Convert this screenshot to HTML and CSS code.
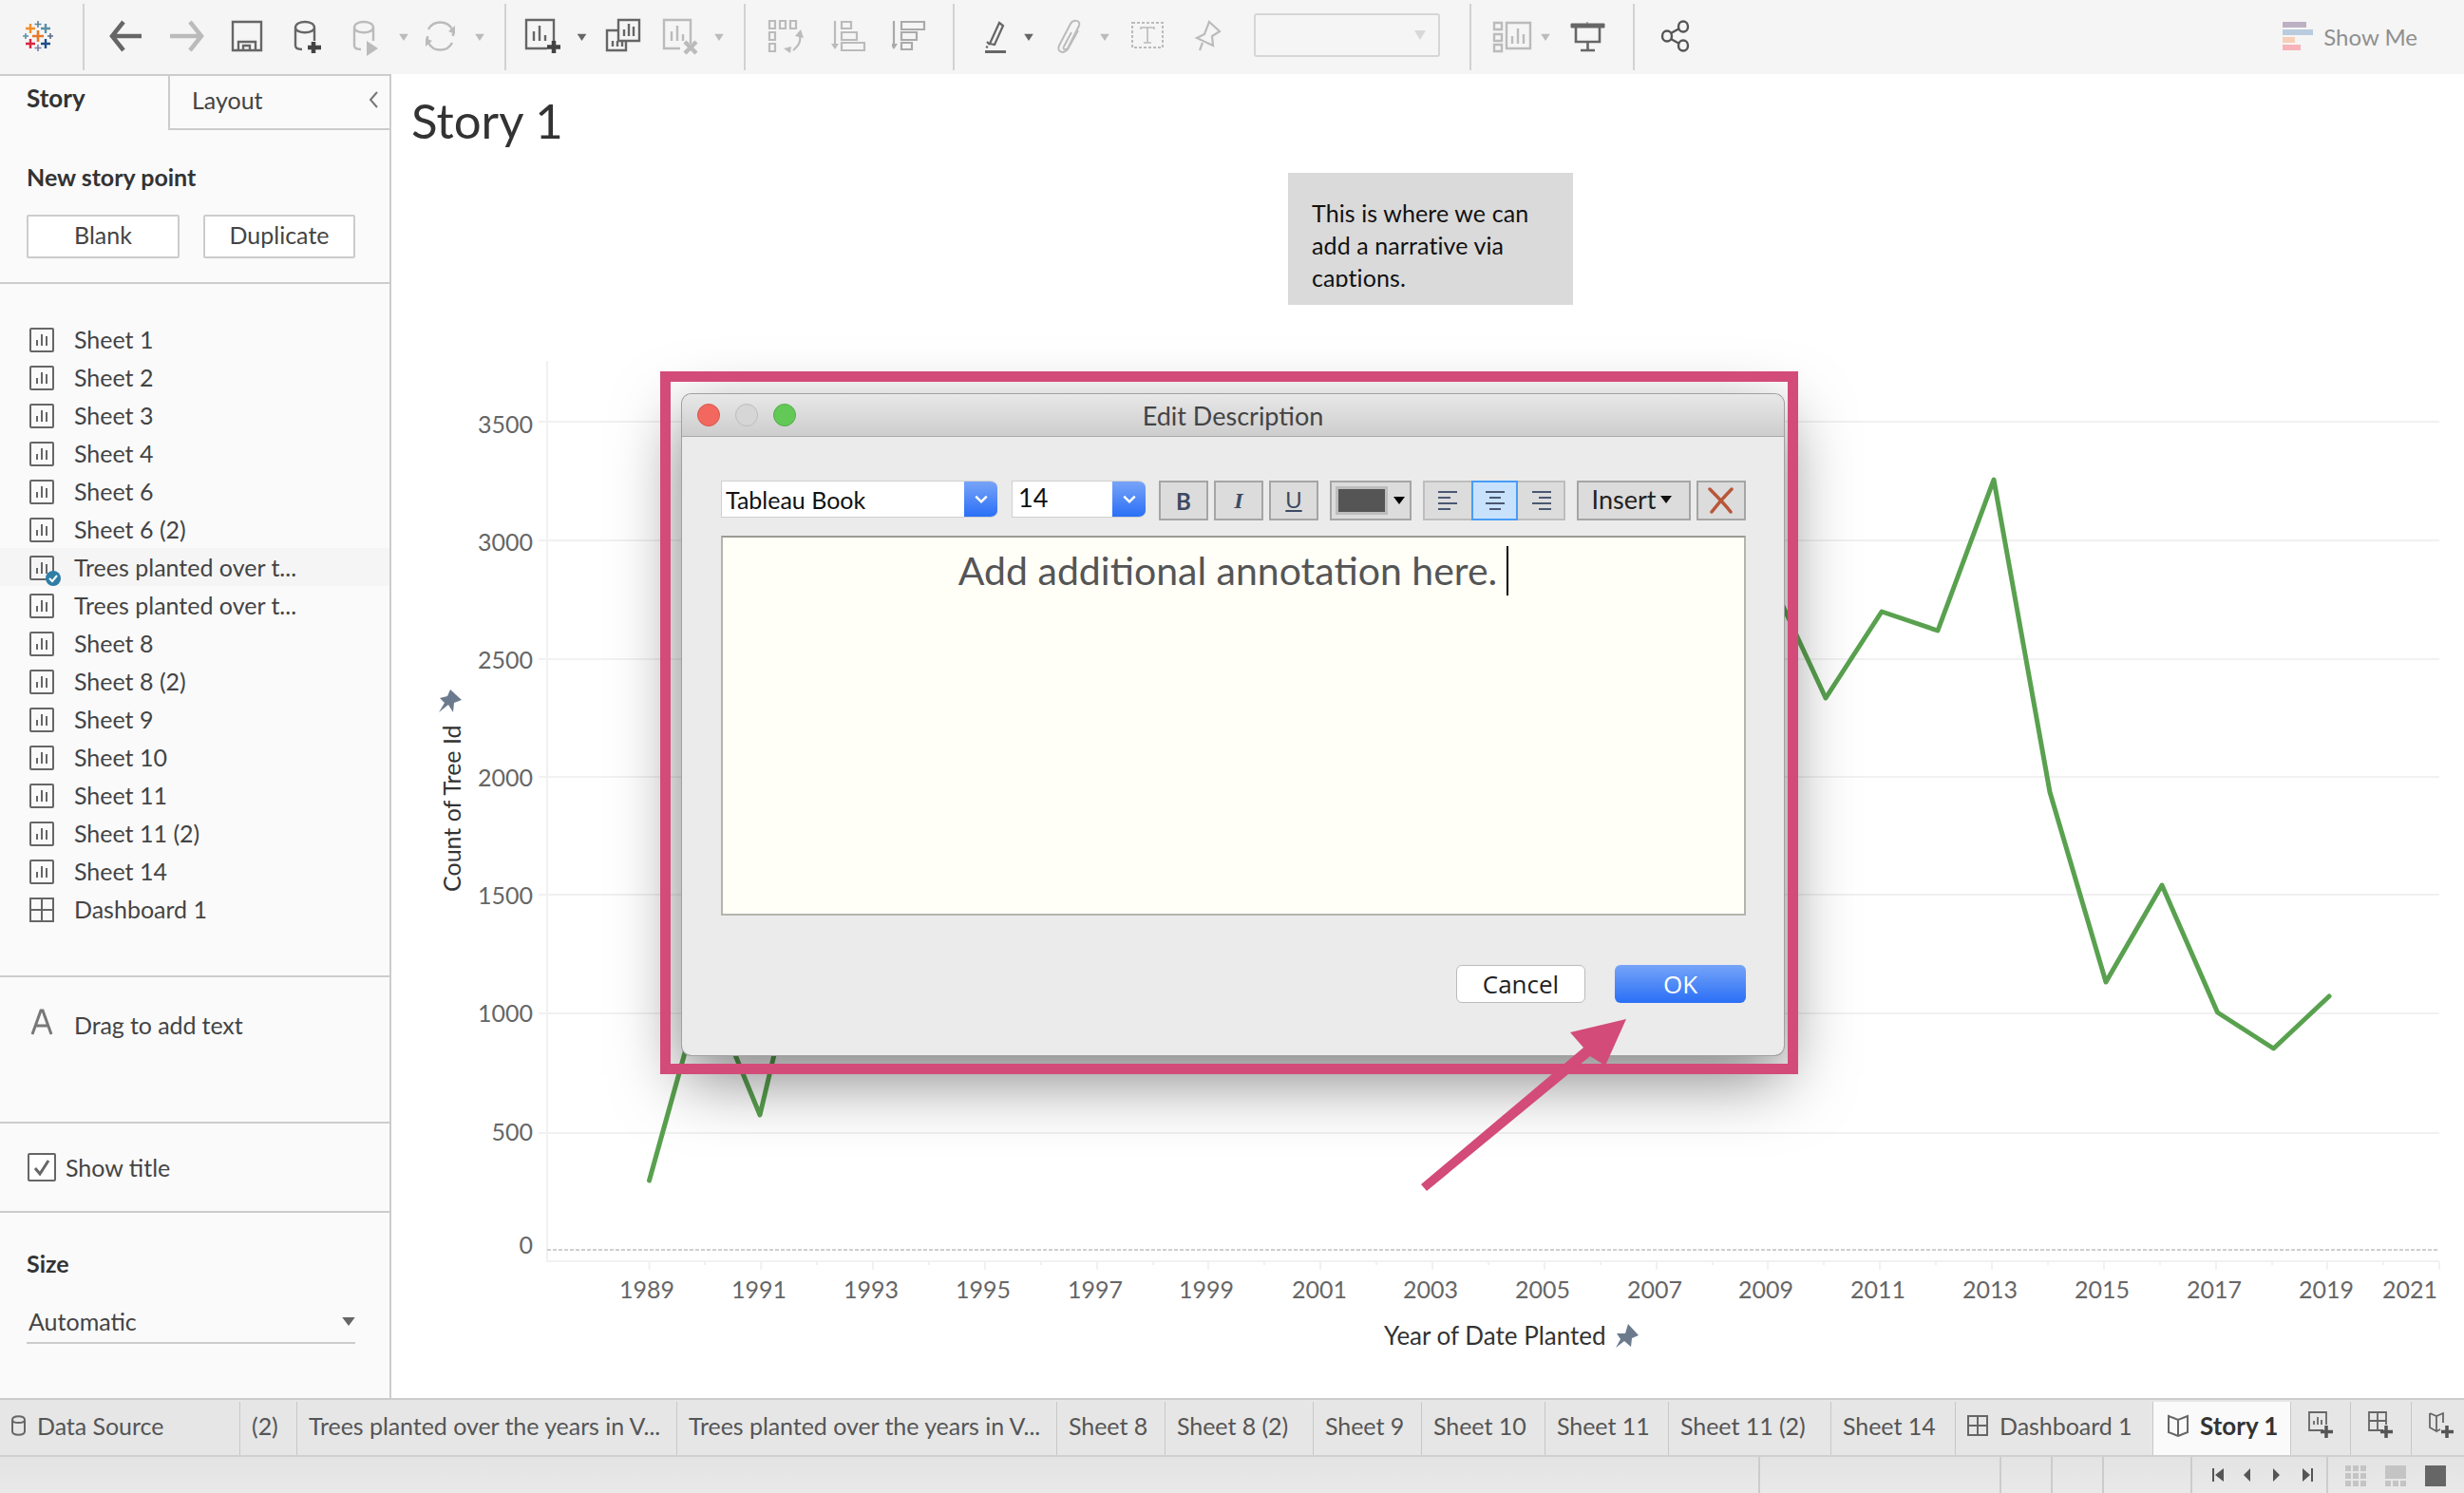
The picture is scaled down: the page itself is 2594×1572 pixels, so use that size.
FILE: index.html
```html
<!DOCTYPE html>
<html lang="en">
<head>
<meta charset="utf-8">
<title>Story 1</title>
<link rel="stylesheet" href="styles.css">
</head>
<body>
<svg class="defs" width="0" height="0">
  <symbol id="sheet" viewBox="0 0 26 26"><rect x="1" y="1" width="24" height="24" rx="1" fill="none" stroke="#666" stroke-width="2"/><path d="M8 19v-6M13 19V7M18 19V9" stroke="#666" stroke-width="2" fill="none"/></symbol>
  <symbol id="caret" viewBox="0 0 12 10"><path d="M0 1h12L6 10z"/></symbol>
</svg>

<header class="toolbar">
  <svg class="ic" width="87" height="78" viewBox="0 0 87 78"><g fill="none"><path d="M40 32v12M34 38h12" stroke="#e8762b" stroke-width="2.600"/><path d="M32 25v10M27 30h10" stroke="#f28e2b" stroke-width="2.400"/><path d="M48 25v10M43 30h10" stroke="#5a8fa8" stroke-width="2.400"/><path d="M32 41v10M27 46h10" stroke="#d7263d" stroke-width="2.400"/><path d="M48 41v10M43 46h10" stroke="#1f4e8c" stroke-width="2.400"/><path d="M40 22v7M36.500 25.500h7" stroke="#59879b" stroke-width="1.600"/><path d="M40 47v7M36.500 50.500h7" stroke="#7a7fa8" stroke-width="1.600"/><path d="M27 35v6M24 38h6" stroke="#5a8fa8" stroke-width="1.600"/><path d="M53 35v6M50 38h6" stroke="#5d6b8c" stroke-width="1.600"/></g></svg>
  <i class="sep"></i>
  <svg class="ic" width="76" height="78" viewBox="89 0 76 78"><path d="M149 38H119M130 23l-12 15 12 15" fill="none" stroke="#666" stroke-width="4.500"/></svg>
  <svg class="ic" width="62" height="78" viewBox="165 0 62 78"><path d="M179 38h30M200 23l12 15-12 15" fill="none" stroke="#bbb" stroke-width="4.500"/></svg>
  <svg class="ic" width="66" height="78" viewBox="227 0 66 78"><path d="M245 23h30v30h-30zM251 53V44h18v9M256 53v-5h7v5" fill="none" stroke="#666" stroke-width="2.400"/></svg>
  <svg class="ic" width="63" height="78" viewBox="293 0 63 78"><path d="M311 29c0-8 20-8 20 0v14M311 29c0 7 20 7 20 0M311 29v19c0 3 2 4 7 4" fill="none" stroke="#666" stroke-width="2.400"/><path d="M330 44v12M324 50h14" stroke="#444" stroke-width="4.500"/></svg>
  <svg class="ic" width="57" height="78" viewBox="356 0 57 78"><path d="M373 29c0-8 20-8 20 0v14M373 29c0 7 20 7 20 0M373 29v19c0 3 2 4 7 4" fill="none" stroke="#bbb" stroke-width="2.400"/><path d="M386 43l12 8-12 8z" fill="#bbb"/></svg>
  <svg class="ic" width="24" height="78" viewBox="413 0 24 78"><use href="#caret" x="420" y="35" width="10" height="8" fill="#bbb"/></svg>
  <svg class="ic" width="53" height="78" viewBox="437 0 53 78"><path d="M451 31c5-10 20-10 25 0M476 45c-5 10-20 10-25 0M450 41c0 0 0-3 0-3M477 35v3" fill="none" stroke="#bbb" stroke-width="2.400"/><path d="M472 33l7-6v9zM455 43l-7 6v-9z" fill="#bbb"/></svg>
  <svg class="ic" width="41" height="78" viewBox="490 0 41 78"><use href="#caret" x="500" y="35" width="10" height="8" fill="#bbb"/></svg>
  <i class="sep"></i>
  <svg class="ic" width="74" height="78" viewBox="533 0 74 78"><path d="M583 47V21h-29v30h22" fill="none" stroke="#666" stroke-width="2.400"/><path d="M562 43V33M568 43V27M574 43V37" stroke="#666" stroke-width="2.400"/><path d="M583 43v13M576 49.500h14" stroke="#444" stroke-width="4.500"/></svg>
  <svg class="ic" width="30" height="78" viewBox="607 0 30 78"><use href="#caret" x="607" y="35" width="11" height="8" fill="#666"/></svg>
  <svg class="ic" width="60" height="78" viewBox="637 0 60 78"><path d="M651 21h22v22h-22zM657 38v-7M662 38V25M667 38V28" fill="none" stroke="#666" stroke-width="2.400"/><path d="M651 32h-12v21h20v-10M645 43v6M650 43v6M655 43v6" fill="none" stroke="#666" stroke-width="2.400"/></svg>
  <svg class="ic" width="55" height="78" viewBox="697 0 55 78"><path d="M727 46V21h-28v30h17M707 43V33M713 43V27M719 43V36" fill="none" stroke="#bbb" stroke-width="2.400"/><path d="M721 44l12 12M733 44l-12 12" stroke="#bbb" stroke-width="4.500"/></svg>
  <svg class="ic" width="31" height="78" viewBox="752 0 31 78"><use href="#caret" x="752" y="35" width="10" height="8" fill="#bbb"/></svg>
  <i class="sep"></i>
  <svg class="ic" width="88" height="78" viewBox="785 0 88 78"><g fill="none" stroke="#bbb" stroke-width="2.200"><path d="M810 22h6v8h-6zM821 22h6v8h-6zM832 22h6v8h-6zM810 34h6v8h-6zM810 46h6v8h-6zM841 34c3 8 1 13-6 19"/></g><path d="M837 38l6-7 3 9zM825 51l8-2-1 7z" fill="#bbb"/></svg>
  <svg class="ic" width="66" height="78" viewBox="873 0 66 78"><g fill="none" stroke="#bbb" stroke-width="2.200"><path d="M879 22v27M886 23h10v7h-10zM886 34h16v8h-16zM886 45h24v8h-24z"/></g><path d="M875 46h8l-4 6z" fill="#bbb"/></svg>
  <svg class="ic" width="64" height="78" viewBox="939 0 64 78"><g fill="none" stroke="#aaa" stroke-width="2.200"><path d="M941 22v27M949 23h24v8h-24zM949 34h16v8h-16zM949 45h11v7h-11z"/></g><path d="M937 46h8l-4 6z" fill="#aaa"/></svg>
  <i class="sep"></i>
  <svg class="ic" width="70" height="78" viewBox="1005 0 70 78"><path d="M1052 24l4 3-9 20-5-1zM1039 44l3 3M1038 49l2 1" fill="none" stroke="#666" stroke-width="2.200"/><path d="M1037 53h22v3h-22z" fill="#666"/></svg>
  <svg class="ic" width="30" height="78" viewBox="1075 0 30 78"><use href="#caret" x="1078" y="35" width="10" height="8" fill="#666"/></svg>
  <svg class="ic" width="50" height="78" viewBox="1105 0 50 78"><path d="M1128 34l-8 15c-2 3 2 4 4 2l12-24c2-6-6-7-9-2l-12 23c-3 7 5 9 9 4l11-20" fill="none" stroke="#bbb" stroke-width="2"/></svg>
  <svg class="ic" width="29" height="78" viewBox="1155 0 29 78"><use href="#caret" x="1158" y="35" width="10" height="8" fill="#bbb"/></svg>
  <svg class="ic" width="56" height="78" viewBox="1184 0 56 78"><rect x="1192" y="24" width="32" height="26" fill="none" stroke="#bbb" stroke-width="2" stroke-dasharray="3 2"/><path d="M1201 31v-2h14v2M1208 29v16M1204 45h8" fill="none" stroke="#bbb" stroke-width="1.600"/></svg>
  <svg class="ic" width="80" height="78" viewBox="1240 0 80 78"><path d="M1273 23l11 10-8 5 1 10-17-8 8-4zM1266 45l-3 8" fill="none" stroke="#bbb" stroke-width="2.200"/></svg>
  <div class="combo"><svg width="14" height="10" viewBox="0 0 12 10"><path d="M0 0h12L6 10z" fill="#d8d8d8"/></svg></div>
  <i class="sep sep-after-combo"></i>
  <svg class="ic" width="73" height="78" viewBox="1549 0 73 78"><g fill="none" stroke="#bbb" stroke-width="2.400"><path d="M1573 24h8v7h-8zM1573 36h8v7h-8zM1573 47h8v7h-8zM1586 24h25v27h-25zM1592 46v-8M1598 46V30M1604 46v-10"/></g></svg>
  <svg class="ic" width="30" height="78" viewBox="1622 0 30 78"><use href="#caret" x="1622" y="35" width="10" height="8" fill="#bbb"/></svg>
  <svg class="ic" width="67" height="78" viewBox="1652 0 67 78"><path d="M1654 25h35v4h-35zM1671 23v3" stroke="#666" fill="#666" stroke-width="1"/><path d="M1659 29v15h25V29M1671.500 44v9M1664 53h15" fill="none" stroke="#666" stroke-width="2.600"/></svg>
  <i class="sep"></i>
  <svg class="ic" width="80" height="78" viewBox="1721 0 80 78"><g fill="none" stroke="#555" stroke-width="2.400"><ellipse cx="1772" cy="28" rx="5" ry="5.500"/><ellipse cx="1772" cy="48" rx="5" ry="5.500"/><ellipse cx="1755" cy="38" rx="5" ry="5.500"/><path d="M1759 35l9-5M1759 41l9 5"/></g></svg>
  <div class="showme"><span class="bars"><i class="b1"></i><i class="b2"></i><i class="b3"></i><i class="b4"></i></span>Show Me</div>
</header>

<div class="workspace">
  <aside class="sidebar">
    <div class="sb-tabs"><div class="tab-on">Story</div><div class="tab-off">Layout<svg width="10" height="20" viewBox="0 0 10 20"><path d="M9 2L2 10l7 8" fill="none" stroke="#777" stroke-width="2"/></svg></div></div>
    <section class="sb-new">
      <h3 class="bold-h">New story point</h3>
      <div class="btns"><button class="plain b-blank">Blank</button><button class="plain b-dup">Duplicate</button></div>
    </section>
    <ul class="sheets">
      <li><svg width="26" height="26"><use href="#sheet"/></svg>Sheet 1</li>
      <li><svg width="26" height="26"><use href="#sheet"/></svg>Sheet 2</li>
      <li><svg width="26" height="26"><use href="#sheet"/></svg>Sheet 3</li>
      <li><svg width="26" height="26"><use href="#sheet"/></svg>Sheet 4</li>
      <li><svg width="26" height="26"><use href="#sheet"/></svg>Sheet 6</li>
      <li><svg width="26" height="26"><use href="#sheet"/></svg>Sheet 6 (2)</li>
      <li class="cur"><svg width="26" height="26"><use href="#sheet"/></svg><svg class="badge" width="16" height="16" viewBox="0 0 16 16"><circle cx="8" cy="8" r="8" fill="#2f7ea6"/><path d="M4 8l3 3 5-6" fill="none" stroke="#fff" stroke-width="2"/></svg>Trees planted over t...</li>
      <li><svg width="26" height="26"><use href="#sheet"/></svg>Trees planted over t...</li>
      <li><svg width="26" height="26"><use href="#sheet"/></svg>Sheet 8</li>
      <li><svg width="26" height="26"><use href="#sheet"/></svg>Sheet 8 (2)</li>
      <li><svg width="26" height="26"><use href="#sheet"/></svg>Sheet 9</li>
      <li><svg width="26" height="26"><use href="#sheet"/></svg>Sheet 10</li>
      <li><svg width="26" height="26"><use href="#sheet"/></svg>Sheet 11</li>
      <li><svg width="26" height="26"><use href="#sheet"/></svg>Sheet 11 (2)</li>
      <li><svg width="26" height="26"><use href="#sheet"/></svg>Sheet 14</li>
      <li><svg width="26" height="26" viewBox="0 0 26 26"><path d="M1 1h24v24H1zM13 1v24M1 13h24" fill="none" stroke="#666" stroke-width="2"/></svg>Dashboard 1</li>
    </ul>
    <section class="sb-text"><svg width="26" height="28" viewBox="0 0 26 28"><path d="M3 27L12 2h2l9 25M7 18h12" fill="none" stroke="#777" stroke-width="3"/></svg>Drag to add text</section>
    <section class="sb-show"><span class="check"><svg width="18" height="18" viewBox="0 0 18 18"><path d="M2 10l5 6L16 2" fill="none" stroke="#666" stroke-width="3"/></svg></span>Show title</section>
    <section class="sb-size">
      <h3 class="bold-h">Size</h3>
      <div class="size-sel">Automatic<svg width="14" height="9" viewBox="0 0 12 8"><path d="M0 0h12L6 8z" fill="#666"/></svg></div>
    </section>
  </aside>

  <main class="main">
    <h1 class="story-title">Story 1</h1>
    <div class="caption"><p>This is where we can add a narrative via captions.</p></div>
    <svg class="chart" width="2182" height="1394" viewBox="412 78 2182 1394">
      <g class="grid">
        <path d="M576 380V1329M567 444H2568M567 569H2568M567 694H2568M567 818H2568M567 942H2568M567 1067H2568M567 1193H2568M576 1328H2568"/>
        <path d="M683.500 1329v8M801.300 1329v8M919 1329v8M1037 1329v8M1155 1329v8M1272 1329v8M1390 1329v8M1508 1329v8M1626 1329v8M1744 1329v8M1861 1329v8M1979 1329v8M2097 1329v8M2215 1329v8M2333 1329v8M2450 1329v8M2568 1329v8"/>
        <path d="M742 1329v3M860 1329v3M978 1329v3M1096 1329v3M1214 1329v3M1331 1329v3M1449 1329v3M1567 1329v3M1685 1329v3M1803 1329v3M1920 1329v3M2038 1329v3M2156 1329v3M2274 1329v3M2392 1329v3M2509 1329v3"/>
      </g>
      <path class="zero" d="M576 1316H2568"/>
      <g class="ylab">
        <text x="561" y="456">3500</text><text x="561" y="580">3000</text><text x="561" y="704">2500</text><text x="561" y="828">2000</text><text x="561" y="952">1500</text><text x="561" y="1076">1000</text><text x="561" y="1201">500</text><text x="561" y="1320">0</text>
      </g>
      <g class="xlab">
        <text x="681" y="1367">1989</text><text x="799" y="1367">1991</text><text x="917" y="1367">1993</text><text x="1035" y="1367">1995</text><text x="1153" y="1367">1997</text><text x="1270" y="1367">1999</text><text x="1389" y="1367">2001</text><text x="1506" y="1367">2003</text><text x="1624" y="1367">2005</text><text x="1742" y="1367">2007</text><text x="1859" y="1367">2009</text><text x="1977" y="1367">2011</text><text x="2095" y="1367">2013</text><text x="2213" y="1367">2015</text><text x="2331" y="1367">2017</text><text x="2449" y="1367">2019</text><text x="2537" y="1367">2021</text>
      </g>
      <text class="axt" transform="translate(485 939) rotate(-90)">Count of Tree Id</text>
      <text class="axt axt-x" x="1457" y="1416">Year of Date Planted</text>
      <path class="pin" d="M474 726l12 11-8 3-1 10-5-8-10 8 6-10-5-5 8-2z"/>
      <path class="pin" d="M1714 1394l11 12-7 3-1 9-7-6-9 7 5-9-4-6h9z"/>
      <path class="trend" d="M683.500 1243L742 1033 800 1174 860 920 1000 800 1300 700 1600 650 1863 608 1922 735 1981 644 2040 664 2099 505 2158 834 2217 1034 2276 932 2334.500 1066 2393.500 1104 2452 1049"/>
    </svg>
  </main>
</div>

<nav class="tabs">
  <div class="t"><svg width="15" height="22" viewBox="0 0 15 22"><path d="M1 5c0-5 13-5 13 0v12c0 5-13 5-13 0zM1 5c0 4 13 4 13 0" fill="none" stroke="#666" stroke-width="2"/></svg>Data Source</div>
  <div class="t">(2)</div>
  <div class="t">Trees planted over the years in V...</div>
  <div class="t">Trees planted over the years in V...</div>
  <div class="t">Sheet 8</div>
  <div class="t">Sheet 8 (2)</div>
  <div class="t">Sheet 9</div>
  <div class="t">Sheet 10</div>
  <div class="t">Sheet 11</div>
  <div class="t">Sheet 11 (2)</div>
  <div class="t">Sheet 14</div>
  <div class="t"><svg width="22" height="22" viewBox="0 0 22 22"><path d="M1 1h20v20H1zM11 1v20M1 11h20" fill="none" stroke="#666" stroke-width="2"/></svg>Dashboard 1</div>
  <div class="t on"><svg width="22" height="24" viewBox="0 0 22 24"><path d="M1 2l10 4 10-4v17l-10 4-10-4zM11 6v17" fill="none" stroke="#666" stroke-width="2"/></svg>Story 1</div>
  <div class="t ico"><svg width="28" height="30" viewBox="0 0 28 30"><path d="M17 20H2V1h18v13M7 14v-4M11 14V6M15 14V9" fill="none" stroke="#666" stroke-width="1.800"/><path d="M20 15v13M14 21.500h13" stroke="#555" stroke-width="3.500"/></svg></div>
  <div class="t ico"><svg width="28" height="30" viewBox="0 0 28 30"><path d="M17 20H2V1h18v13M11 1v19M2 10h18" fill="none" stroke="#666" stroke-width="1.800"/><path d="M20 15v13M14 21.500h13" stroke="#555" stroke-width="3.500"/></svg></div>
  <div class="t ico last"><svg width="28" height="30" viewBox="0 0 28 30"><path d="M2 2l7 3 7-3v10M2 2v15l7 4v-16M9 21l4-2" fill="none" stroke="#666" stroke-width="1.800"/><path d="M20 15v13M14 21.500h13" stroke="#555" stroke-width="3.500"/></svg></div>
</nav>

<footer class="status">
  <i class="s"></i><i class="s"></i><i class="s"></i><i class="s"></i><i class="s"></i>
  <div class="s nav"><svg width="143" height="38" viewBox="2308 1534 143 38"><path fill="#555" d="M2329 1546h2v14h-2zM2341 1546v14l-9-7zM2369 1546v14l-7-7zM2393 1546v14l7-7zM2424 1546v14l8-7zM2433 1546h2v14h-2z"/></svg></div>
  <div class="views"><svg width="143" height="38" viewBox="2451 1534 143 38"><g fill="#c4c4c4"><path d="M2469 1543h6v6h-6zM2477 1543h6v6h-6zM2485 1543h6v6h-6zM2469 1551h6v6h-6zM2477 1551h6v6h-6zM2485 1551h6v6h-6zM2469 1559h6v6h-6zM2477 1559h6v6h-6zM2485 1559h6v6h-6z"/><path d="M2511 1543h22v14h-22zM2511 1559h6v6h-6zM2519 1559h6v6h-6zM2527 1559h6v6h-6z"/></g><path d="M2553 1543h22v22h-22z" fill="#666"/></svg></div>
</footer>

<div class="dialog">
  <div class="titlebar"><i class="dot red"></i><i class="dot grey"></i><i class="dot green"></i><span>Edit Description</span></div>
  <div class="dlg-body">
    <div class="dlg-tools">
      <div class="sel sel-font"><span>Tableau Book</span><b><svg width="16" height="12" viewBox="0 0 14 10"><path d="M2 2l5 5 5-5" fill="none" stroke="#fff" stroke-width="2.200"/></svg></b></div>
      <div class="sel sel-size"><span>14</span><b><svg width="16" height="12" viewBox="0 0 14 10"><path d="M2 2l5 5 5-5" fill="none" stroke="#fff" stroke-width="2.200"/></svg></b></div>
      <button class="fmt f-b">B</button>
      <button class="fmt f-i">I</button>
      <button class="fmt f-u">U</button>
      <button class="fmt f-c"><i class="swatch"></i><svg width="12" height="8" viewBox="0 0 12 8"><path d="M0 0h12L6 8z"/></svg></button>
      <div class="aligns">
        <button class="al"><svg width="22" height="20" viewBox="0 0 22 20"><path d="M0 1h20M0 7h13M0 13h20M0 19h13" stroke="#4a5872" stroke-width="2"/></svg></button>
        <button class="al act"><svg width="22" height="20" viewBox="0 0 22 20"><path d="M1 1h20M5 7h12M1 13h20M5 19h12" stroke="#4a5872" stroke-width="2"/></svg></button>
        <button class="al"><svg width="22" height="20" viewBox="0 0 22 20"><path d="M2 1h20M9 7h13M2 13h20M9 19h13" stroke="#4a5872" stroke-width="2"/></svg></button>
      </div>
      <button class="fmt f-ins">Insert<svg width="12" height="8" viewBox="0 0 12 8"><path d="M0 0h12L6 8z" fill="#111"/></svg></button>
      <button class="fmt f-x"><svg width="28" height="28" viewBox="0 0 28 28"><path d="M2 2c8 8 16 16 22 24M25 2C17 10 10 18 4 26" fill="none" stroke="#b8573a" stroke-width="3.500" stroke-linecap="round"/></svg></button>
    </div>
    <div class="editor"><span>Add additional annotation here.</span><i class="cursor"></i></div>
    <div class="dlg-foot"><button class="cancel">Cancel</button><button class="ok">OK</button></div>
  </div>
</div>
<div class="frame"></div>
<svg class="arrow" width="230" height="195" viewBox="1490 1065 230 195"><polygon points="1496,1247 1667,1103 1653,1087 1712,1073 1690,1122 1674,1112 1502,1254" fill="#d34b78"/></svg>
</body>
</html>
```

FILE: styles.css
```css
* { box-sizing: border-box; }
html, body { margin: 0; padding: 0; }
body {
  position: relative;
  width: 2594px;
  height: 1572px;
  overflow: hidden;
  display: flex;
  flex-direction: column;
  background: #fff;
  color: #444;
  font-family: Lato, "Open Sans", "Liberation Sans", sans-serif;
  font-size: 25px;
}
button { font-family: inherit; padding: 0; margin: 0; }
.defs { position: absolute; }

/* toolbar */
.toolbar { height: 78px; flex: none; display: flex; align-items: stretch; background: #f5f5f5; }
.ic { display: block; flex: none; }
.sep { flex: none; width: 2px; height: 70px; margin-top: 4px; background: #d2d2d2; }
.sep-after-combo { margin-left: 31px; }
.combo {
  flex: none; width: 196px; height: 46px; margin: 14px 0 0 0;
  border: 2px solid #d6d6d6; border-radius: 3px;
  display: flex; align-items: center; justify-content: flex-end; padding-right: 12px;
}
.showme { margin-left: auto; padding: 0 49px 2px 0; display: flex; align-items: center; gap: 11px; color: #8f8f8f; font-size: 24px; }
.bars { display: flex; flex-direction: column; gap: 2px; width: 32px; }
.bars i { display: block; height: 6px; }
.b1 { width: 25px; background: #bdb0c4; }
.b2 { width: 32px; background: #b9cbdf; }
.b3 { width: 13px; background: #f6cfb8; }
.b4 { width: 19px; background: #f7b3b9; }

/* layout */
.workspace { flex: 1; display: flex; min-height: 0; }
.sidebar { width: 412px; flex: none; display: flex; flex-direction: column; background: #fafafa; border-right: 2px solid #ccc; border-top: 2px solid #ccc; color: #444; }
.sb-tabs { height: 57px; flex: none; display: flex; }
.tab-on { width: 177px; padding: 7px 0 0 28px; font-weight: 700; font-size: 26px; color: #333; }
.tab-off { flex: 1; display: flex; justify-content: space-between; align-items: center; padding: 0 12px 5px 23px; border-left: 2px solid #ccc; border-bottom: 2px solid #ccc; color: #444; }
.bold-h { margin: 0; font-size: 25px; font-weight: 700; color: #333; line-height: 34px; }
.sb-new { height: 162px; flex: none; padding: 32px 0 0 28px; border-bottom: 2px solid #ccc; }
.btns { display: flex; gap: 25px; margin-top: 23px; }
.plain { height: 46px; background: #fff; border: 2px solid #ccc; border-radius: 2px; font-size: 25px; color: #444; padding-bottom: 4px; }
.b-blank { width: 161px; }
.b-dup { width: 160px; }
.sheets { list-style: none; margin: 0; padding: 38px 0 0; height: 730px; flex: none; border-bottom: 2px solid #ccc; }
.sheets li { position: relative; height: 40px; display: flex; align-items: center; gap: 21px; padding-left: 31px; white-space: nowrap; }
.sheets li svg:first-child { position: relative; top: 1px; }
.sheets li.cur { background: #f5f5f5; }
.badge { position: absolute; left: 48px; top: 24px; }
.sb-text { height: 154px; flex: none; display: flex; align-items: flex-start; gap: 21px; padding: 33px 0 0 31px; line-height: 34px; border-bottom: 2px solid #ccc; letter-spacing: -0.1px; }
.sb-show { height: 94px; flex: none; display: flex; align-items: flex-start; gap: 10px; padding: 31px 0 0 29px; line-height: 30px; border-bottom: 2px solid #ccc; }
.check { width: 30px; height: 30px; border: 2px solid #666; border-radius: 2px; display: flex; align-items: center; justify-content: center; background: #fff; }
.sb-size { flex: 1; padding: 36px 36px 0 28px; }
.size-sel { margin-top: 27px; height: 41px; display: flex; justify-content: space-between; align-items: center; padding: 0 0 5px 2px; border-bottom: 2px solid #ccc; }

.main { flex: 1; position: relative; background: #fff; min-width: 0; }
.story-title { margin: 0; padding: 14px 0 0 21px; font-size: 51px; font-weight: 400; color: #333; line-height: 70px; position: relative; }
.caption { position: relative; z-index: 1; width: 300px; height: 139px; margin: 20px 0 0 944px; padding: 25px 0 0 25px; background: #dadada; color: #111; }
.caption p { margin: 0; height: 95px; overflow: hidden; line-height: 34px; width: 268px; letter-spacing: 0.1px; }
.chart { position: absolute; left: 0; top: 0; }
.grid path { fill: none; stroke: #f1f1f1; stroke-width: 2; }
.zero { fill: none; stroke: #cfcfcf; stroke-width: 2; stroke-dasharray: 4 2; }
.ylab text { font-size: 25px; fill: #666; text-anchor: end; }
.xlab text { font-size: 25px; fill: #666; text-anchor: middle; }
.axt { font-size: 25px; fill: #333; }
.axt-x { font-size: 26px; }
.pin { fill: #6b7a8c; }
.trend { fill: none; stroke: #59a14f; stroke-width: 5; stroke-linejoin: round; stroke-linecap: round; }

/* sheet tabs */
.tabs {
  height: 62px; flex: none;
  display: grid;
  grid-template-columns: 253px 60px 400px 400px 114px 156px 114px 130px 130px 171px 131px 208px 145px 63px 64px 56px;
  background: #e6e6e6;
  border-top: 2px solid #ccc;
  border-bottom: 2px solid #d0d0d0;
  color: #555;
}
.t { display: flex; align-items: center; gap: 12px; padding: 0 0 6px 12px; border-right: 1px solid #c8c8c8; margin-top: 2px; white-space: nowrap; overflow: hidden; letter-spacing: -0.05px; }
.t.on { background: #fafafa; font-weight: 700; color: #333; padding-left: 15px; font-size: 26px; letter-spacing: 0; }
.t.ico { padding-left: 17px; }
.t.last { border-right: none; }
.status { height: 38px; flex: none; background: linear-gradient(#e3e3e3, #e9e9e9); display: grid; grid-template-columns: 1853px 254px 54px 54px 93px 143px 1fr; }
.s { border-right: 2px solid #ccc; display: block; }
.views { overflow: hidden; }
.views svg, .nav svg { display: block; }

/* dialog */
.dialog {
  position: absolute; left: 718px; top: 415px; width: 1160px; height: 696px;
  background: #ebebeb; border-radius: 10px;
  box-shadow: 0 0 0 1px #a0a0a0, 0 24px 70px rgba(0,0,0,.5);
  display: flex; flex-direction: column;
}
.titlebar { height: 45px; flex: none; position: relative; border-radius: 10px 10px 0 0; background: linear-gradient(#e8e8e8, #cdcdcd); border-bottom: 1px solid #a8a8a8; display: flex; align-items: center; gap: 16px; padding-left: 16px; }
.titlebar span { position: absolute; left: 0; right: 0; text-align: center; color: #444; font-size: 27px; padding-bottom: 0; }
.dot { width: 24px; height: 24px; border-radius: 50%; }
.red { background: #f2685e; border: 1px solid #d8574d; }
.grey { background: #d6d6d6; border: 1px solid #bdbdbd; }
.green { background: #63c956; border: 1px solid #53ad47; }
.dlg-body { flex: 1; padding: 46px 40px 0 41px; display: flex; flex-direction: column; }
.dlg-tools { display: flex; height: 42px; flex: none; align-items: flex-start; }
.sel { height: 39px; display: flex; align-items: center; background: #fff; border: 1px solid #cfcfcf; border-right: none; border-radius: 0 7px 7px 0; color: #111; font-size: 25px; overflow: hidden; }
.sel span { flex: 1; padding-left: 4px; }
.sel b { width: 35px; height: 100%; background: linear-gradient(#78a4f8, #2a6ff6); display: flex; align-items: center; justify-content: center; }
.sel-font { width: 291px; }
.sel-size { width: 141px; margin-left: 15px; }
.sel-size span { padding: 0 0 4px 6px; font-size: 27px; }
.fmt { height: 42px; width: 52px; background: #dcdcdc; border: 2px solid #a5a5a5; color: #3b4a63; font-size: 24px; font-weight: 700; display: flex; align-items: center; justify-content: center; }
.f-b { margin-left: 14px; }
.f-i { margin-left: 6px; font-style: italic; font-family: "Liberation Serif", serif; }
.f-u { margin-left: 6px; text-decoration: underline; font-weight: 400; font-family: "Liberation Sans", sans-serif; }
.f-c { margin-left: 12px; width: 86px; justify-content: flex-start; gap: 6px; padding-left: 4px; }
.swatch { width: 55px; height: 30px; background: #555; border: 3px solid #bdbdbd; }
.aligns { margin-left: 12px; width: 150px; height: 42px; display: grid; grid-template-columns: 51px 49px 50px; }
.al { background: #dcdcdc; border: 2px solid #bdbdbd; display: flex; align-items: center; justify-content: center; }
.al:first-child { border-right: none; }
.al:last-child { border-left: none; }
.al.act { background: #c8e2fd; border-color: #4a9cf5; }
.f-ins { margin-left: 12px; width: 120px; gap: 5px; color: #222; font-weight: 400; font-size: 27px; padding: 0 4px 3px 0; }
.f-x { margin-left: 6px; }
.editor { margin-top: 16px; height: 400px; flex: none; background: #fffff8; border: 2px solid #b4b4ac; border-top-color: #9a9a92; display: flex; justify-content: center; align-items: flex-start; padding-top: 9px; color: #555; font-size: 41px; }
.editor span { line-height: 52px; }
.cursor { width: 2px; height: 52px; margin-left: 10px; background: #000; }
.dlg-foot { margin-top: 52px; display: flex; justify-content: flex-end; gap: 31px; }
.cancel { width: 136px; height: 40px; background: #fff; border: 1px solid #bbb; border-radius: 6px; font-size: 26px; color: #222; font-family: "Open Sans", sans-serif; }
.ok { width: 138px; height: 40px; background: linear-gradient(#76a4f8, #2a6ff6); border: none; border-radius: 6px; font-size: 26px; color: #fff; font-family: "Open Sans", sans-serif; }
.frame { position: absolute; left: 695px; top: 391px; width: 1198px; height: 740px; border: 11px solid #d34b78; }
.arrow { position: absolute; left: 1490px; top: 1065px; }
```
